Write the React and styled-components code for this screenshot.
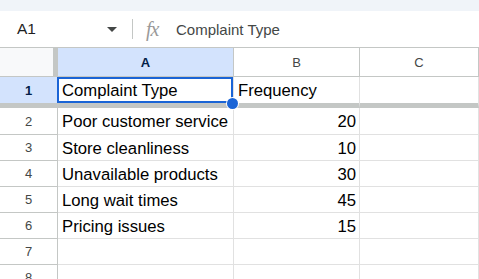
import styled, { createGlobalStyle } from "styled-components";

const GlobalStyle = createGlobalStyle`
    html, body {
        margin: 0;
        padding: 0;
        background: #fff;
    }
    body {
        font-family: 'Liberation Sans', Arial, sans-serif;
        overflow: hidden;
    }
`;

const Page = styled.div`
    width: 479px;
    height: 279px;
    overflow: hidden;
    display: flex;
    flex-direction: column;
`;

const TopStrip = styled.div`
    height: 11px;
    background: #f0f4f9;
    flex-shrink: 0;
`;

const FormulaBar = styled.div`
    height: 36px;
    flex-shrink: 0;
    display: flex;
    align-items: center;
    border-bottom: 1px solid #c4c7c5;
    background: #fff;
`;

const NameBox = styled.div`
    width: 90px;
    padding-left: 17px;
    font-size: 15.5px;
    color: #1f1f1f;
`;

const Caret = styled.span`
    width: 0;
    height: 0;
    border-left: 5px solid transparent;
    border-right: 5px solid transparent;
    border-top: 5px solid #444746;
    margin-right: 15px;
`;

const Divider = styled.span`
    width: 1px;
    height: 20px;
    background: #c4c7c5;
    margin-right: 13px;
`;

const Fx = styled.span`
    font-family: 'Liberation Serif', 'Times New Roman', serif;
    font-style: italic;
    font-size: 20px;
    color: #9a9a9a;
    width: 30px;
    letter-spacing: -1px;
`;

const FormulaText = styled.span`
    font-size: 15px;
    color: #444746;
`;

const Sheet = styled.div`
    position: relative;
    display: grid;
    grid-template-columns: 58px 176px 126px 1fr;
    grid-template-rows: 29px 31px 27px repeat(6, 26px);
`;

const Corner = styled.div`
    background: #f8f9fa;
    border-right: 5px solid #c4c7c5;
    border-bottom: 1px solid #c4c7c5;
`;

const ColHeader = styled.div`
    display: flex;
    align-items: center;
    justify-content: center;
    padding-top: 1px;
    font-size: 13px;
    background: ${p => (p.$active ? "#d3e3fd" : "#fff")};
    color: ${p => (p.$active ? "#041e49" : "#444746")};
    font-weight: ${p => (p.$active ? 700 : 400)};
    border-right: 1px solid #c4c7c5;
    border-bottom: 1px solid #c4c7c5;
`;

const RowHeader = styled.div`
    display: flex;
    align-items: center;
    justify-content: center;
    font-size: 13px;
    background: ${p => (p.$active ? "#d3e3fd" : "#fff")};
    color: ${p => (p.$active ? "#041e49" : "#444746")};
    font-weight: ${p => (p.$active ? 700 : 400)};
    border-right: 1px solid #c4c7c5;
    border-bottom: ${p => (p.$frozen ? "5px" : "1px")} solid #c4c7c5;
`;

const Cell = styled.div`
    display: flex;
    align-items: center;
    justify-content: ${p => (p.$num ? "flex-end" : "flex-start")};
    padding: 2px 3px 0 4px;
    font-size: 16.7px;
    color: #000;
    white-space: nowrap;
    overflow: hidden;
    border-right: 1px solid #e1e1e1;
    border-bottom: ${p => (p.$frozen ? "5px solid #c4c7c5" : "1px solid #e1e1e1")};
`;

const Selection = styled.div`
    position: absolute;
    left: 57px;
    top: 29px;
    width: 176px;
    height: 26px;
    box-sizing: border-box;
    border: 2px solid #1a64d6;
    pointer-events: none;
`;

const FillHandle = styled.div`
    position: absolute;
    left: 227px;
    top: 50px;
    width: 11px;
    height: 11px;
    border-radius: 50%;
    background: #1a64d6;
    box-shadow: 0 0 0 1px #fff;
`;

const rows = [
    ["Complaint Type", "Frequency"],
    ["Poor customer service", "20"],
    ["Store cleanliness", "10"],
    ["Unavailable products", "30"],
    ["Long wait times", "45"],
    ["Pricing issues", "15"],
    ["", ""],
    ["", ""],
];

export default function App() {
    return (
        <Page>
            <GlobalStyle />
            <TopStrip />
            <FormulaBar>
                <NameBox>A1</NameBox>
                <Caret />
                <Divider />
                <Fx>fx</Fx>
                <FormulaText>Complaint Type</FormulaText>
            </FormulaBar>
            <Sheet>
                <Corner />
                <ColHeader $active>A</ColHeader>
                <ColHeader>B</ColHeader>
                <ColHeader>C</ColHeader>
                {rows.map((r, i) => {
                    const frozen = i === 0;
                    const isNum = r[1] !== "" && !isNaN(Number(r[1]));
                    return [
                        <RowHeader key={`h${i}`} $active={i === 0} $frozen={frozen}>{i + 1}</RowHeader>,
                        <Cell key={`a${i}`} $frozen={frozen}>{r[0]}</Cell>,
                        <Cell key={`b${i}`} $frozen={frozen} $num={isNum}>{r[1]}</Cell>,
                        <Cell key={`c${i}`} $frozen={frozen} />,
                    ];
                })}
                <Selection />
                <FillHandle />
            </Sheet>
        </Page>
    );
}
